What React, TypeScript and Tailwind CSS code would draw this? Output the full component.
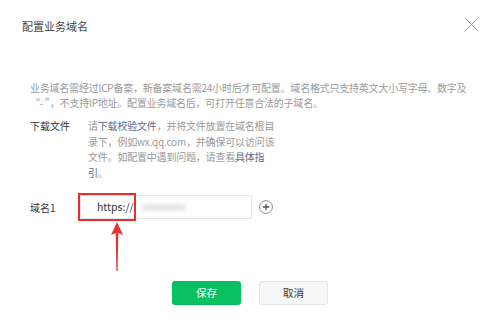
import React from 'react';

/**
 * Dialog for configuring a business domain (业务域名)
 */
const App: React.FC = () => {
  return (
    <div className="relative w-[499px] h-[322px] overflow-hidden bg-white font-['Noto_Sans_CJK_SC',_'Noto_Sans',_sans-serif]">
      {/* Header */}
      <div className="flex items-start justify-between pl-[22px] pr-[21px] pt-[18px]">
        <h1 className="text-[11px] leading-[16px] text-[#444]">配置业务域名</h1>
        <svg width="13" height="13" viewBox="0 0 13 13">
          <path d="M0.5 0.5 L12.5 12.5 M12.5 0.5 L0.5 12.5" stroke="#9a9a9a" strokeWidth="1" fill="none" />
        </svg>
      </div>

      {/* Description */}
      <div className="mt-[46px] pl-[30px] text-[10px] leading-[15px] tracking-[-0.22px] text-[#9a9a9a]">
        <p>业务域名需经过ICP备案，新备案域名需24小时后才可配置。域名格式只支持英文大小写字母、数字及</p>
        <p>“- ”，不支持IP地址。配置业务域名后，可打开任意合法的子域名。</p>
      </div>

      {/* Download file row */}
      <div className="mt-[8px] flex pl-[30px] text-[10px] leading-[15.5px]">
        <div className="w-[58px] text-[#353535]">下载文件</div>
        <div className="tracking-[-0.2px] text-[#9a9a9a]">
          <p>
            请<span className="text-[#576b95]">下载校验文件</span>，并将文件放置在域名根目
          </p>
          <p>录下，例如wx.qq.com，并确保可以访问该</p>
          <p>
            文件。如配置中遇到问题，请查看<span className="text-[#576b95]">具体指</span>
          </p>
          <p>
            <span className="text-[#576b95]">引</span>。
          </p>
        </div>
      </div>

      {/* Domain input row */}
      <div className="mt-[15px] flex items-center pl-[30px]">
        <div className="w-[50px] text-[10px] text-[#353535]">域名1</div>
        <div className="relative flex h-[24px] w-[172px] items-center rounded-[2px] border border-[#e4e4e4] pl-[16px] text-[10.5px] text-[#353535]">
          <span>https://</span>
          <span className="ml-[8px] h-[5px] w-[44px] rounded-full bg-[#dcdcdc] blur-[2px]" />
          {/* Highlight box */}
          <div className="absolute left-[-3px] top-[-3px] h-[28px] w-[58px] border-2 border-[#e0312e]" />
        </div>
        <svg width="14" height="14" viewBox="0 0 14 14" className="ml-[7px]">
          <circle cx="7" cy="7" r="6.4" stroke="#8a8a8a" strokeWidth="1" fill="none" />
          <path d="M7 3.8 V10.2 M3.8 7 H10.2" stroke="#555" strokeWidth="1.3" />
        </svg>
      </div>

      {/* Red arrow pointing at the prefix */}
      <svg width="14" height="50" viewBox="0 0 14 50" className="absolute left-[110px] top-[222px]">
        <path d="M7 0 L13 13 L8.3 11 L7.6 49 L6.4 49 L5.7 11 L1 13 Z" fill="#e5322d" />
      </svg>

      {/* Footer buttons */}
      <div className="mt-[62px] flex gap-[18px] pl-[172px]">
        <button className="h-[24px] w-[69px] rounded-[3px] bg-[#07c160] text-[10.5px] text-white">保存</button>
        <button className="h-[24px] w-[69px] rounded-[3px] border border-[#e5e5e5] bg-[#f7f7f7] text-[10.5px] text-[#353535]">
          取消
        </button>
      </div>
    </div>
  );
};

export default App;
